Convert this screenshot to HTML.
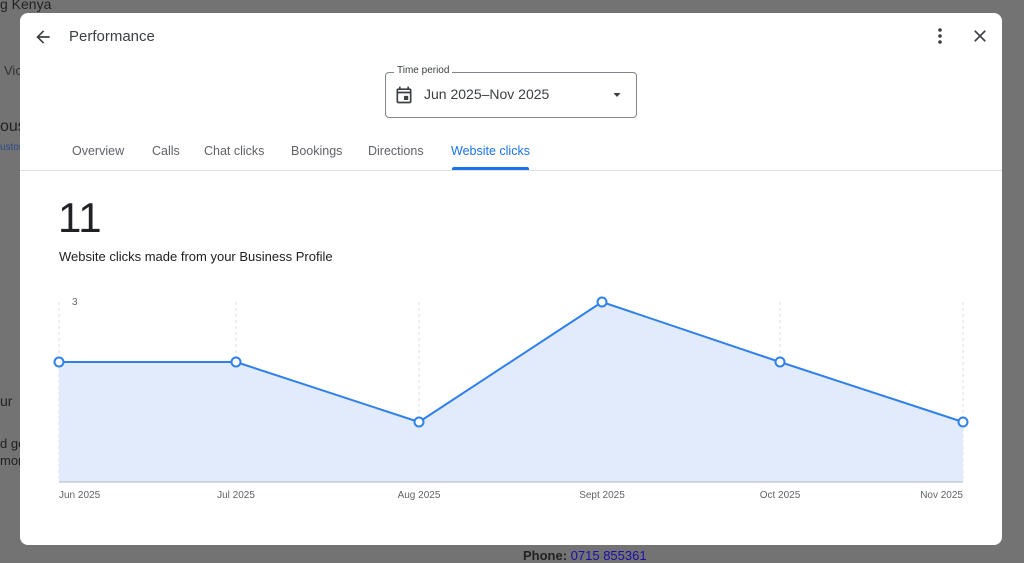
<!DOCTYPE html>
<html><head><style>
body{margin:0;width:1024px;height:560px;background:#737373;font-family:"Liberation Sans",sans-serif;position:relative;overflow:hidden}
.bg{position:absolute;color:#222;font-size:13px}
.modal{position:absolute;left:20px;top:13px;width:982px;height:532px;background:#fff;border-radius:8px;overflow:hidden}
.t{position:absolute;color:#3c4043}
.tab{position:absolute;top:144px;font-size:12.5px;color:#5f6368}
</style></head><body>
<div class="bg" style="left:0;top:-4px;font-size:14px">g Kenya</div>
<div class="bg" style="left:4px;top:63px;color:#333">Vic</div>
<div class="bg" style="left:0;top:118px;font-size:16px">ous</div>
<div class="bg" style="left:0;top:142px;font-size:10px;color:#2a4a8a">ustor</div>
<div class="bg" style="left:0;top:393px;font-size:14px">ur</div>
<div class="bg" style="left:0;top:436px">d ge</div>
<div class="bg" style="left:0;top:453px">mor</div>
<div class="bg" style="left:523px;top:548px;font-weight:bold">Phone: <span style="font-weight:normal;color:#1a0dab">0715 855361</span></div>
<div class="modal">
<svg style="position:absolute;left:13px;top:14px" width="20" height="20" viewBox="0 0 24 24"><path d="M20 11H7.8l5.6-5.6L12 4l-8 8 8 8 1.4-1.4L7.8 13H20z" fill="#3c4043"/></svg>
<div class="t" style="left:49px;top:15px;font-size:15px">Performance</div>
<svg style="position:absolute;left:908px;top:11px" width="24" height="24" viewBox="0 0 24 24"><circle cx="12" cy="6" r="1.8" fill="#3c4043"/><circle cx="12" cy="12" r="1.8" fill="#3c4043"/><circle cx="12" cy="18" r="1.8" fill="#3c4043"/></svg>
<svg style="position:absolute;left:950px;top:13px" width="20" height="20" viewBox="0 0 24 24"><path d="M19 6.4 17.6 5 12 10.6 6.4 5 5 6.4 10.6 12 5 17.6 6.4 19 12 13.4 17.6 19 19 17.6 13.4 12z" fill="#3c4043"/></svg>
<div style="position:absolute;left:365px;top:59px;width:250px;height:44px;border:1px solid #80868b;border-radius:4px"></div>
<div class="t" style="left:374px;top:52px;font-size:10px;background:#fff;padding:0 3px">Time period</div>
<svg style="position:absolute;left:374px;top:72px" width="20" height="20" viewBox="0 0 24 24"><path d="M19 4h-1V2h-2v2H8V2H6v2H5c-1.1 0-2 .9-2 2v14c0 1.1.9 2 2 2h14c1.1 0 2-.9 2-2V6c0-1.1-.9-2-2-2zm0 16H5V10h14zM5 8V6h14v2zm7 5h5v5h-5z" fill="#3c4043"/></svg>
<div class="t" style="left:404px;top:73px;font-size:14px">Jun 2025–Nov 2025</div>
<svg style="position:absolute;left:592px;top:77px" width="10" height="10" viewBox="0 0 10 10"><path d="M1.5 3h7L5 7z" fill="#3c4043"/></svg>
<div class="tab" style="left:52px;top:131px">Overview</div>
<div class="tab" style="left:132px;top:131px">Calls</div>
<div class="tab" style="left:184px;top:131px">Chat clicks</div>
<div class="tab" style="left:271px;top:131px">Bookings</div>
<div class="tab" style="left:348px;top:131px">Directions</div>
<div class="tab" style="left:431px;top:131px;color:#1a73e8">Website clicks</div>
<div style="position:absolute;left:432px;top:154px;width:77px;height:3px;background:#1a73e8;border-radius:2px 2px 0 0"></div>
<div style="position:absolute;left:0;top:157px;width:982px;height:1px;background:#e0e0e0"></div>
<div class="t" style="left:38px;top:181px;font-size:42px;color:#202124">11</div>
<div class="t" style="left:39px;top:236px;font-size:13px;color:#202124">Website clicks made from your Business Profile</div>
</div>
<svg style="position:absolute;left:0;top:0" width="1024" height="560">
<g stroke="#dadce0" stroke-dasharray="3,3"><line x1="59" y1="302" x2="59" y2="482"/><line x1="236" y1="302" x2="236" y2="482"/><line x1="419" y1="302" x2="419" y2="482"/><line x1="602" y1="302" x2="602" y2="482"/><line x1="780" y1="302" x2="780" y2="482"/><line x1="963" y1="302" x2="963" y2="482"/></g>
<polygon points="59,362 236,362 419,422 602,302 780,362 963,422 963,482 59,482" fill="#e1ebfb"/>
<line x1="59" y1="482" x2="963" y2="482" stroke="#b0b6c3"/>
<polyline points="59,362 236,362 419,422 602,302 780,362 963,422" fill="none" stroke="#3080ec" stroke-width="2"/>
<g fill="#fff" stroke="#3080ec" stroke-width="2"><circle cx="59" cy="362" r="4.5"/><circle cx="236" cy="362" r="4.5"/><circle cx="419" cy="422" r="4.5"/><circle cx="602" cy="302" r="4.5"/><circle cx="780" cy="362" r="4.5"/><circle cx="963" cy="422" r="4.5"/></g>
<g font-family="Liberation Sans" font-size="10" fill="#5f6368"><text x="72" y="305">3</text>
<text x="59" y="498">Jun 2025</text><text x="236" y="498" text-anchor="middle">Jul 2025</text><text x="419" y="498" text-anchor="middle">Aug 2025</text><text x="602" y="498" text-anchor="middle">Sept 2025</text><text x="780" y="498" text-anchor="middle">Oct 2025</text><text x="963" y="498" text-anchor="end">Nov 2025</text></g>
</svg>
</body></html>
